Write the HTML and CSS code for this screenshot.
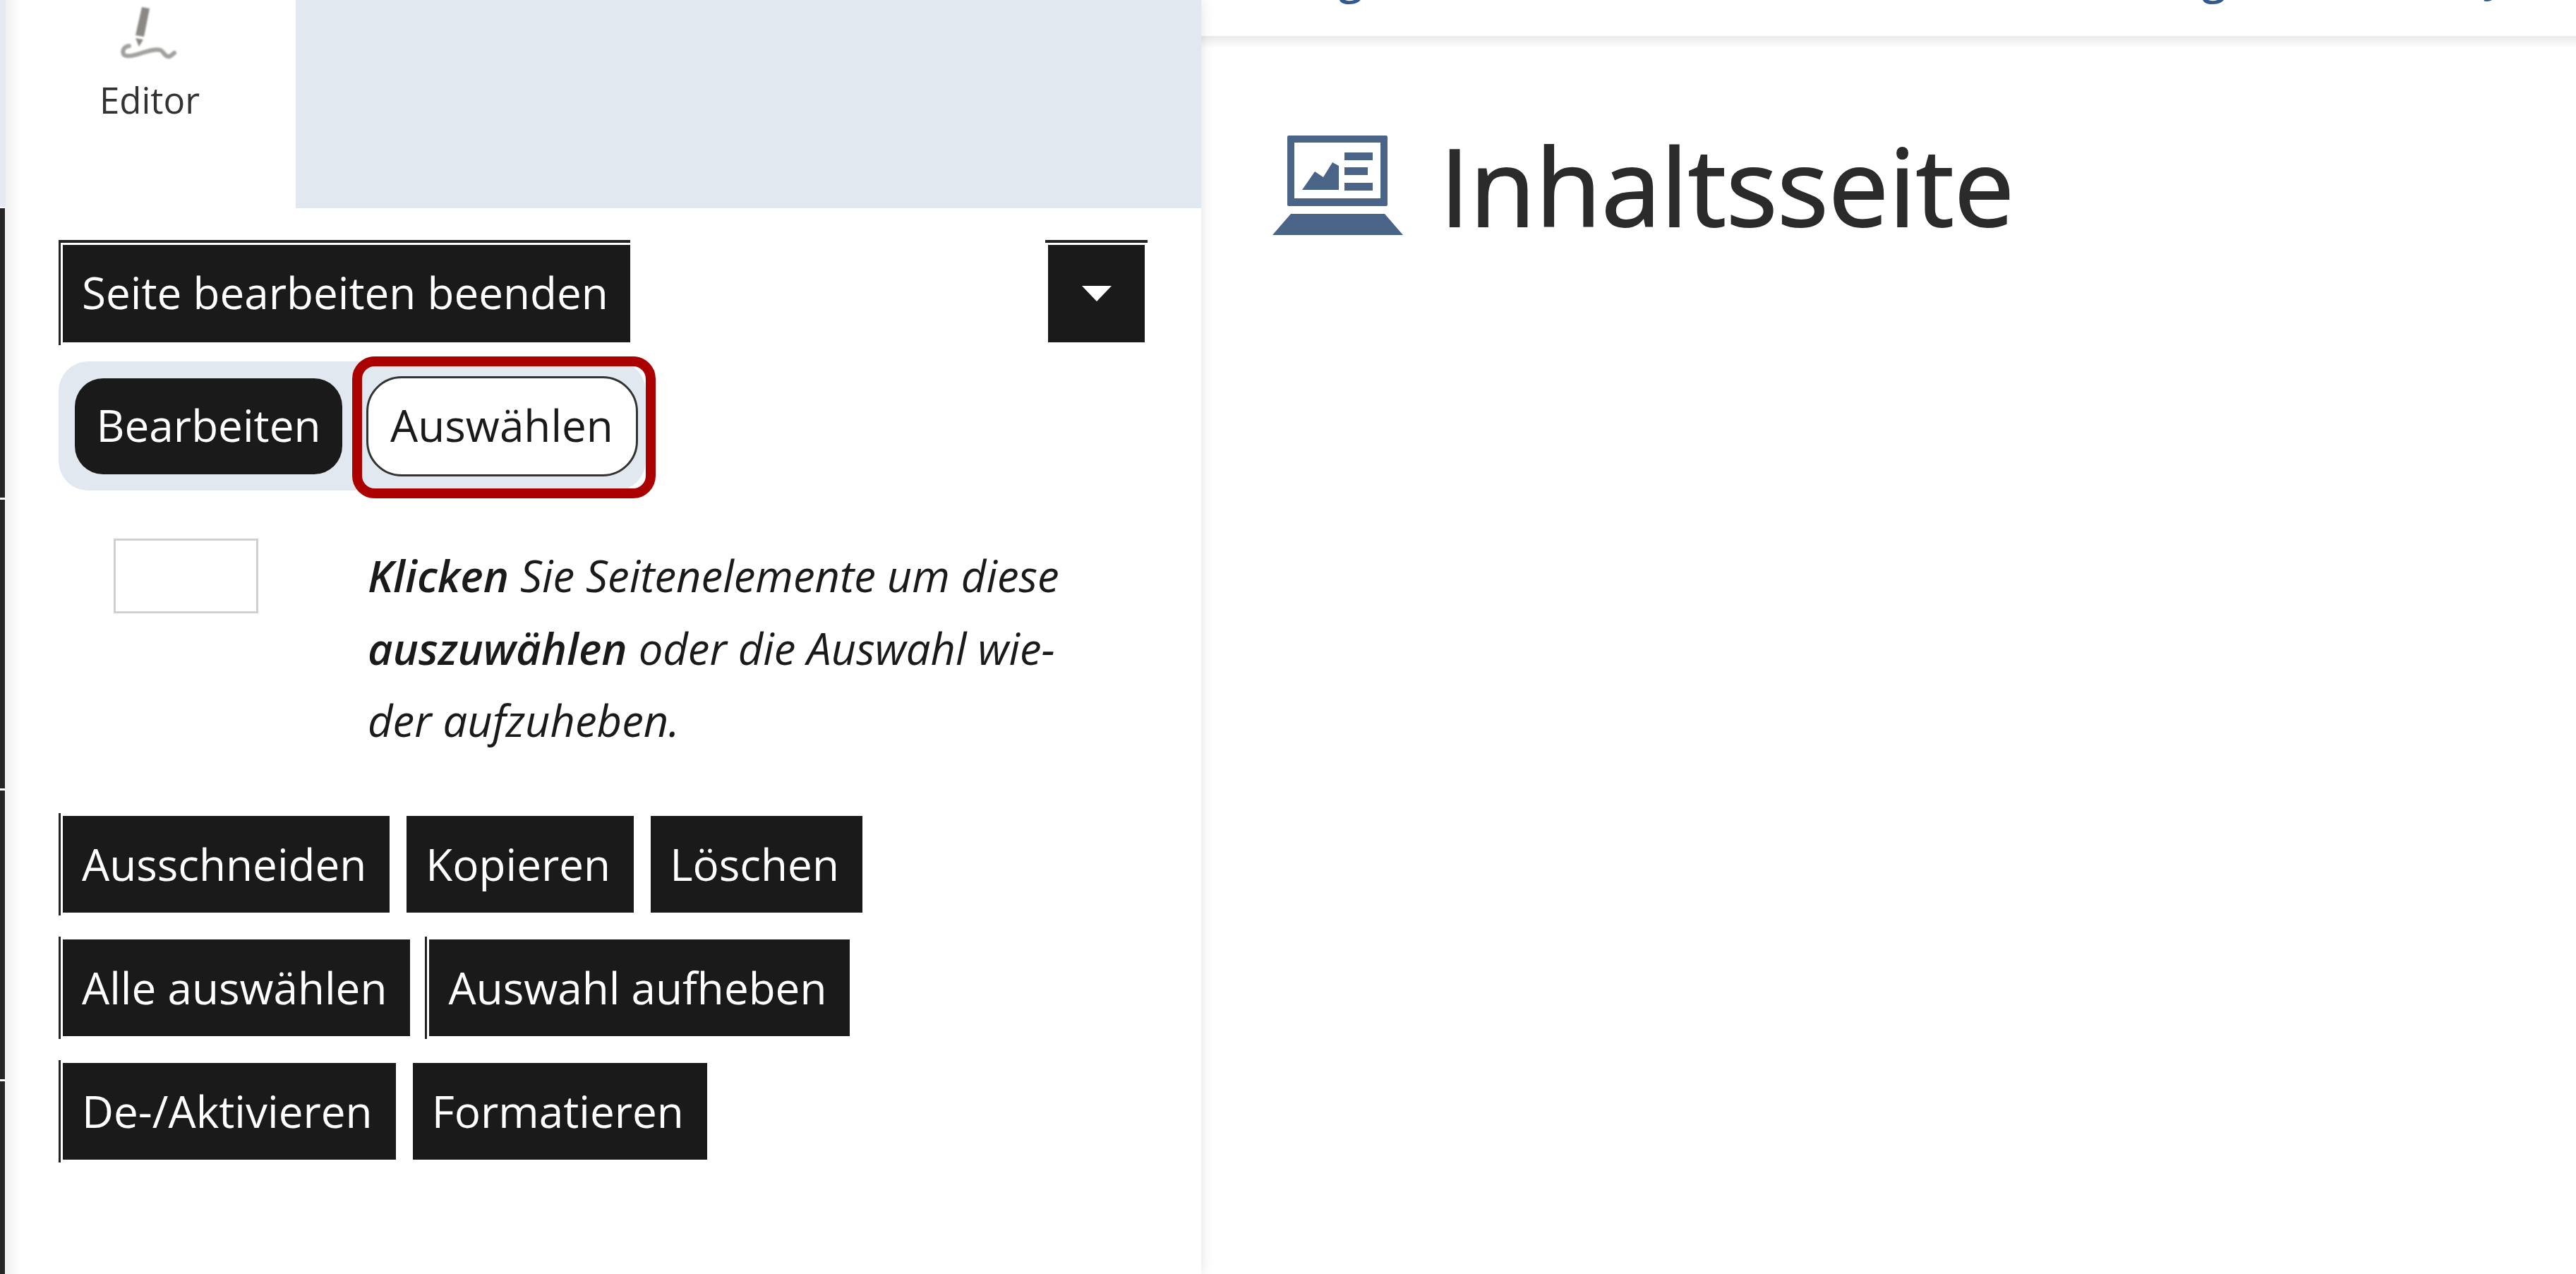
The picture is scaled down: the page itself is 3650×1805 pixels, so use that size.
FILE: index.html
```html
<!DOCTYPE html>
<html lang="de">
<head>
  <meta charset="UTF-8">
  <title>Inhaltsseite</title>
  <link rel="stylesheet" href="styles.css">
</head>
<body>

  <!-- Left edge of the window behind the panel -->
  <div class="strip">
    <div class="strip-top"></div>
    <div class="strip-seg seg-a"></div>
    <div class="strip-seg seg-b"></div>
    <div class="strip-seg seg-b"></div>
    <div class="strip-seg seg-c"></div>
  </div>

  <!-- Editor panel -->
  <div class="panel">
    <div class="tabs">
      <div class="tab">
        <svg class="tab-icon" viewBox="0 0 170 110" width="170" height="110">
          <polygon points="72,10 83,12 75,52 63,50" fill="#8c8985"/>
          <polygon points="63,54 74,56 68,66" fill="#8c8985"/>
          <path d="M54 65C46 66 44 72 46 77C50 82 62 78 72 75C82 72 94 68 100 72C104 76 106 81 111 80C114 79 116 76 118 75" fill="none" stroke="#a3a19e" stroke-width="6" stroke-linecap="round"/>
        </svg>
        <span class="tab-label">Editor</span>
      </div>
      <div class="tabs-fill"></div>
    </div>

    <div class="panel-body">
      <div class="toolbar">
        <button class="btn btn-edge btn-top">Seite bearbeiten beenden</button>
        <button class="btn btn-caret btn-top-only"><span class="caret"></span></button>
      </div>

      <div class="mode-group">
        <button class="mode mode-on">Bearbeiten</button>
        <div class="mode-mark">
          <button class="mode">Auswählen</button>
        </div>
      </div>

      <div class="help">
        <div class="help-pic"></div>
        <p class="help-text"><b>Klicken</b> Sie Seitenelemente um diese<br><b>auszuwählen</b> oder die Auswahl wie-<br>der aufzuheben.</p>
      </div>

      <div class="btn-row">
        <button class="btn btn-edge">Ausschneiden</button>
        <button class="btn">Kopieren</button>
        <button class="btn">Löschen</button>
      </div>
      <div class="btn-row">
        <button class="btn btn-edge">Alle auswählen</button>
        <button class="btn btn-edge btn-second">Auswahl aufheben</button>
      </div>
      <div class="btn-row">
        <button class="btn btn-edge">De-/Aktivieren</button>
        <button class="btn">Formatieren</button>
      </div>
    </div>
  </div>

  <!-- Page content -->
  <div class="main">
    <div class="topbar">
      <span class="nav-cut nav-1">g</span>
      <span class="nav-cut nav-2">g</span>
      <span class="nav-cut nav-3">y</span>
    </div>
    <div class="page-title">
      <svg class="title-icon" viewBox="0 0 185 141" width="185" height="141">
        <path fill-rule="evenodd" fill="#4a6488" d="M23 0H161Q163 0 163 2V98Q163 100 161 100H23Q21 100 21 98V2Q21 0 23 0ZM31 10V89H153V10Z"/>
        <path fill="#4a6488" d="M102 24H142V35H102ZM102 45H135V56H102ZM102 67H142V78H102Z"/>
        <polygon fill="#4a6488" points="42,77 60,51 72,59 85,38 94,43 94,77"/>
        <polygon fill="#4a6488" points="26,111 159,111 185,141 0,141"/>
      </svg>
      <h1>Inhaltsseite</h1>
    </div>
  </div>

</body>
</html>
```

FILE: styles.css
```css
* {
  box-sizing: border-box;
}

html, body {
  height: 100%;
}

body {
  margin: 0;
  display: flex;
  overflow: hidden;
  background: #fff;
  font-family: "Open Sans", sans-serif;
  color: #1a1a1a;
}

/* left edge */
.strip {
  width: 8px;
  flex: none;
  display: flex;
  flex-direction: column;
  gap: 3px;
  background: #fff;
}

.strip-top {
  height: 293px;
  margin-bottom: -1px;
  background: #e4e9f3;
}

.strip-seg {
  background: #262626;
  border-right: 1px solid #fff;
}

.seg-a {
  height: 410px;
}

.seg-b {
  height: 409px;
}

.seg-c {
  flex: 1;
}

/* panel */
.panel {
  width: 1694px;
  flex: none;
  background: linear-gradient(to right, #f0f0f0, #fff 22px);
  position: relative;
  z-index: 2;
  box-shadow: 0 0 18px rgba(0, 0, 0, 0.12);
  clip-path: inset(0 -30px 0 0);
}

.tabs {
  display: flex;
  height: 295px;
}

.tab {
  width: 411px;
  flex: none;
  display: flex;
  flex-direction: column;
  align-items: center;
}

.tab-icon {
  display: block;
  filter: blur(1px);
}

.tab-label {
  margin: -2px 3px 0 0;
  font-size: 51px;
  line-height: 66px;
  color: #333;
}

.tabs-fill {
  flex: 1;
  background: #e1e8f0;
}

.panel-body {
  padding: 52px 80px 0 81px;
}

.toolbar {
  display: flex;
  justify-content: space-between;
}

.btn {
  position: relative;
  height: 138px;
  padding: 0 33px 0 27px;
  border: none;
  border-radius: 0;
  background: #1a1a1a;
  color: #fff;
  font-family: "Open Sans", sans-serif;
  font-size: 62px;
  white-space: nowrap;
}

.toolbar .btn {
  padding: 0 31px 4px 27px;
}

/* the thin lines sitting just outside some buttons */
.btn-edge::before {
  content: "";
  position: absolute;
  left: -6px;
  top: -4px;
  bottom: -4px;
  width: 3px;
  background: #222;
}

.btn-top::after,
.btn-top-only::after {
  content: "";
  position: absolute;
  left: -6px;
  right: 0;
  top: -7px;
  height: 4px;
  background: #222;
}

.btn-top::before {
  top: -7px;
}

.btn-top-only::after {
  right: -4px;
  left: -4px;
}

.toolbar .btn-caret {
  width: 137px;
  padding: 0;
  display: flex;
  align-items: center;
  justify-content: center;
}

.caret {
  width: 0;
  height: 0;
  border-left: 21px solid transparent;
  border-right: 21px solid transparent;
  border-top: 22px solid #fff;
}

.mode-group {
  display: flex;
  align-items: center;
  width: 832px;
  height: 183px;
  margin: 27px 0 0 -6px;
  padding-left: 23px;
  border-radius: 42px;
  background: #e1e8f0;
  position: relative;
}

.mode {
  height: 136px;
  padding: 0 0 4px;
  border: none;
  border-radius: 40px;
  background: #fff;
  color: #1a1a1a;
  font-family: "Open Sans", sans-serif;
  font-size: 62px;
  white-space: nowrap;
}

.mode-on {
  width: 379px;
  background: #1a1a1a;
  color: #fff;
}

.mode-mark {
  position: absolute;
  left: 416px;
  top: -7px;
  width: 430px;
  height: 201px;
  display: flex;
  align-items: center;
  justify-content: center;
  border: 14px solid #aa0000;
  border-radius: 32px;
}

.mode-mark .mode {
  width: 385px;
  height: 142px;
  margin: -4px 6px 0 0;
  border: 3px solid #333;
  border-radius: 50px;
  flex: none;
}

.help {
  display: flex;
  margin-top: 68px;
}

.help-pic {
  width: 205px;
  height: 106px;
  margin-left: 72px;
  flex: none;
  border: 3px solid #d0d0d0;
}

.help-text {
  margin: 1px 0 0 155px;
  font-size: 61.5px;
  line-height: 102.5px;
  font-style: italic;
  white-space: nowrap;
}

.help-text b {
  font-weight: 600;
}

.btn-row {
  display: flex;
  gap: 24px;
  margin-bottom: 38px;
}

.help + .btn-row {
  margin-top: 84px;
}

.btn-row .btn {
  height: 137px;
}

.btn-second {
  margin-left: 3px;
}

/* main area */
.main {
  flex: 1;
  min-width: 0;
}

.topbar {
  height: 52px;
  background: #fff;
  display: flex;
  overflow: hidden;
  border-bottom: 1px solid #ececec;
}

.nav-cut {
  font-size: 60px;
  font-weight: 600;
  line-height: 60px;
  color: #335a8c;
  margin-top: -61px;
}

.nav-1 {
  margin-left: 195px;
}

.nav-2 {
  margin-left: 1190px;
}

.nav-3 {
  margin-left: 365px;
  margin-top: -65px;
}

.page-title {
  display: flex;
  align-items: center;
  padding: 140px 0 0 101px;
  height: 281px;
  gap: 52px;
  background: linear-gradient(to bottom, #ebebeb, #fff 16px);
}

h1 {
  margin: 0;
  font-size: 152px;
  line-height: 141px;
  font-weight: 400;
  -webkit-text-stroke: 2px #2b2b2b;
  color: #2b2b2b;
}
```
